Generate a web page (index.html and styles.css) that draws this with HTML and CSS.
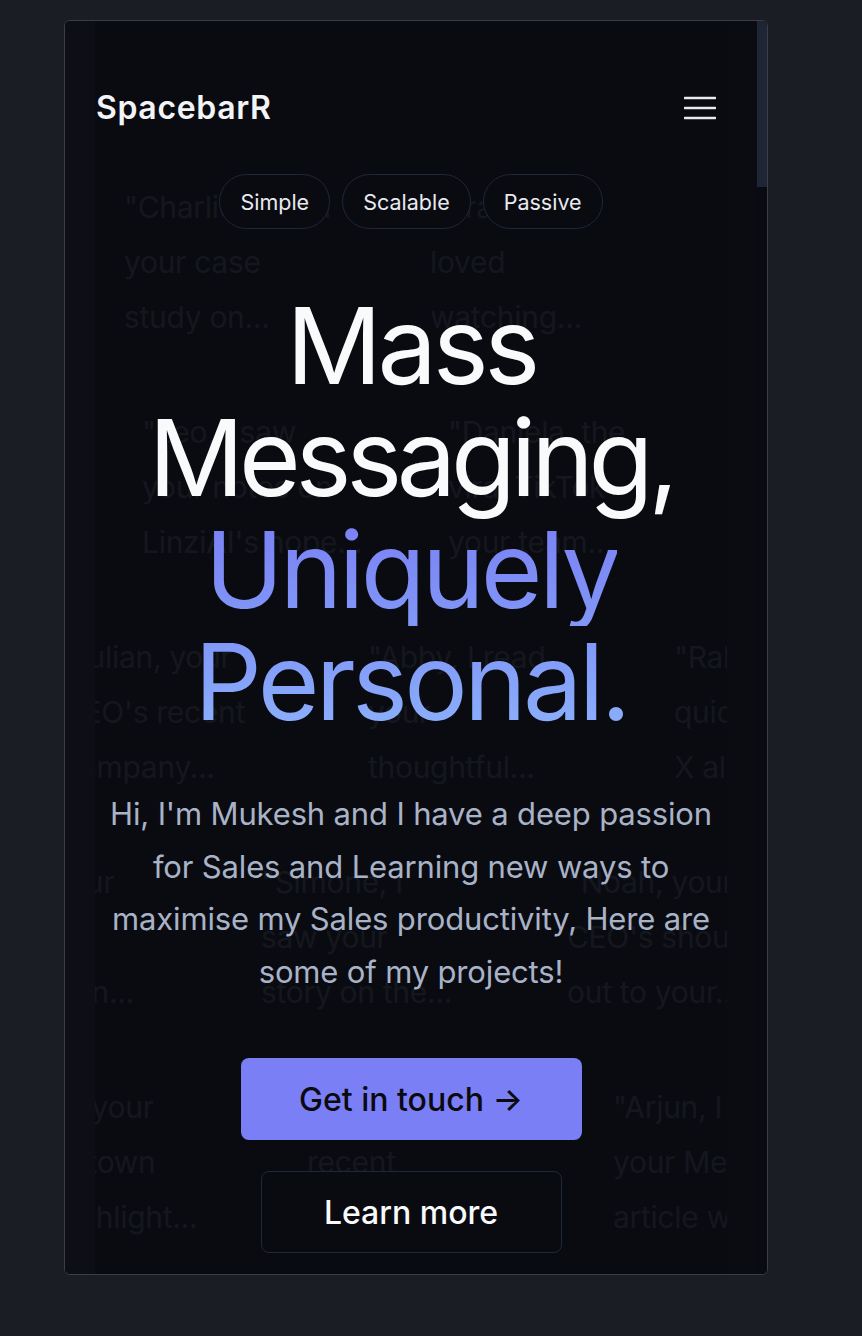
FILE: index.html
```html
<!DOCTYPE html>
<html lang="en">
<head>
<meta charset="utf-8">
<title>SpacebarR</title>
<link rel="stylesheet" href="styles.css">
</head>
<body>
<div class="frame">
  <div class="viewport">
    <div class="quotes" aria-hidden="true">
      <div class="qrow r1">
        <p class="q">"Charlie, I read<br>your case<br>study on...</p>
        <p class="q">"Craig, I<br>loved<br>watching...</p>
        <p class="q">"Maria, your<br>recent<br>keynote...</p>
      </div>
      <div class="qrow r2">
        <p class="q">"Leo, I saw<br>your notes on<br>LinziAI's hope...</p>
        <p class="q">"Daniela, the<br>viral TikTok<br>your team...</p>
        <p class="q">"Omar, your<br>new hire<br>post...</p>
      </div>
      <div class="qrow r3">
        <p class="q">"Julian, your<br>CEO's recent<br>company...</p>
        <p class="q">"Abby, I read<br>your<br>thoughtful...</p>
        <p class="q">"Ralph, a<br>quick note on<br>X algorithms...</p>
      </div>
      <div class="qrow r4">
        <p class="q">"Bella, your<br>podcast<br>episode on...</p>
        <p class="q">"Simone, I<br>saw your<br>story on the...</p>
        <p class="q">"Noah, your<br>CEO's shout<br>out to your...</p>
      </div>
      <div class="qrow r5">
        <p class="q">"Tom, your<br>home town<br>the highlight...</p>
        <p class="q">"Priya, your<br>recent<br>launch post...</p>
        <p class="q">"Arjun, I read<br>your Medium<br>article with...</p>
      </div>
    </div>

    <div class="content">
      <header class="nav">
        <span class="logo">SpacebarR</span>
        <button class="menu" aria-label="Menu">
          <svg width="32" height="24" viewBox="0 0 32 24"><path d="M1 2h30M1 12h30M1 22h30" stroke="#e8eaee" stroke-width="2.6" stroke-linecap="round" fill="none"/></svg>
        </button>
      </header>

      <div class="pills">
        <span class="pill">Simple</span>
        <span class="pill">Scalable</span>
        <span class="pill">Passive</span>
      </div>

      <h1 class="title">
        <span class="white">Mass</span>
        <span class="white">Messaging,</span>
        <span class="grad g1">Uniquely</span>
        <span class="grad g2">Personal.</span>
      </h1>

      <p class="intro">Hi, I'm Mukesh and I have a deep passion for Sales and Learning new ways to maximise my Sales productivity, Here are some of my projects!</p>

      <div class="actions">
        <a class="btn primary" href="#">Get in touch →</a>
        <a class="btn ghost" href="#">Learn more</a>
      </div>
    </div>
  </div>
  <div class="scrollbar"><div class="thumb"></div></div>
</div>
</body>
</html>
```

FILE: styles.css
```css
* { box-sizing: border-box; }

html, body {
  margin: 0;
  padding: 0;
  background: #1b1d24;
}

body {
  font-family: Inter, "Noto Sans", sans-serif;
  padding: 20px 0 0 64px;
  height: 1336px;
  overflow: hidden;
}

.frame {
  width: 704px;
  height: 1255px;
  border: 1px solid #3b3e47;
  border-radius: 6px;
  background: #0a0b11;
  display: flex;
  overflow: hidden;
}

.viewport {
  position: relative;
  flex: 1;
  background: linear-gradient(to right, #0e0f16 0, #0e0f16 30px, #0a0b11 30px, #0a0b11 662px, #0b0b12 662px);
  overflow: hidden;
}

.scrollbar {
  width: 10px;
  background: #0a0b11;
}

.thumb {
  height: 166px;
  background: #1e2535;
}

/* background quotes */
.quotes {
  position: absolute;
  top: 0;
  bottom: 0;
  left: 30px;
  right: 30px;
  overflow: hidden;
  padding-top: 159px;
  display: flex;
  flex-direction: column;
  gap: 60px;
}

.qrow {
  display: flex;
  gap: 36px;
}

.q {
  margin: 0;
  flex: 0 0 270px;
  white-space: nowrap;
  font-size: 30px;
  line-height: 55px;
  color: #15171f;
  letter-spacing: -0.01em;
}

.r1 { margin-left: 29px; }
.r2 { margin-left: 47px; }
.r3 { margin-left: -33px; }
.r4 { margin-left: -140px; }
.r5 { margin-left: -94px; }

/* foreground */
.content {
  position: relative;
  z-index: 1;
  padding: 0 30px;
  display: flex;
  flex-direction: column;
  align-items: center;
}

.nav {
  align-self: stretch;
  display: flex;
  justify-content: space-between;
  align-items: center;
  padding: 67px 11px 0 1px;
}

.logo {
  font-size: 32px;
  font-weight: 600;
  color: #f3f4f6;
  letter-spacing: 0.02em;
}

.menu {
  background: none;
  border: 0;
  padding: 0;
  width: 32px;
  height: 24px;
  display: block;
}

.menu svg { display: block; }

.pills {
  display: flex;
  gap: 12px;
  margin-top: 47px;
}

.pill {
  height: 55px;
  padding: 0 20px;
  border: 1.5px solid #1e2839;
  border-radius: 999px;
  display: flex;
  align-items: center;
  font-size: 21.5px;
  color: #e8eaef;
  background: #0a0b11;
}

.title {
  margin: 61px 0 0;
  font-size: 106px;
  font-weight: 400;
  line-height: 112px;
  letter-spacing: -0.042em;
  text-align: center;
  display: flex;
  flex-direction: column;
  align-items: center;
}

.white { color: #f8fafc; }

.white + .white { letter-spacing: -0.05em; }

.grad {
  -webkit-background-clip: text;
  background-clip: text;
  color: transparent;
  letter-spacing: -0.035em;
}

.g1 {
  background-image: linear-gradient(to bottom, #7a80f4, #8197f7);
}

.g2 {
  background-image: linear-gradient(to bottom, #7f93f7, #8cb2fb);
}

.intro {
  margin: 50px 0 0;
  max-width: 625px;
  font-size: 31px;
  line-height: 52.5px;
  color: #a9b3c7;
  text-align: center;
  letter-spacing: -0.005em;
}

.actions {
  margin-top: 60px;
  display: flex;
  flex-direction: column;
  align-items: center;
  gap: 31px;
}

.btn {
  height: 82px;
  display: flex;
  align-items: center;
  justify-content: center;
  border-radius: 8px;
  font-size: 32px;
  font-weight: 500;
  text-decoration: none;
  letter-spacing: 0;
}

.primary {
  width: 341px;
  background: #7b7ff5;
  color: #0a0a0f;
}

.ghost {
  width: 301px;
  border: 1.5px solid #1e2839;
  color: #f8fafc;
  background: #0a0b11;
}
```
